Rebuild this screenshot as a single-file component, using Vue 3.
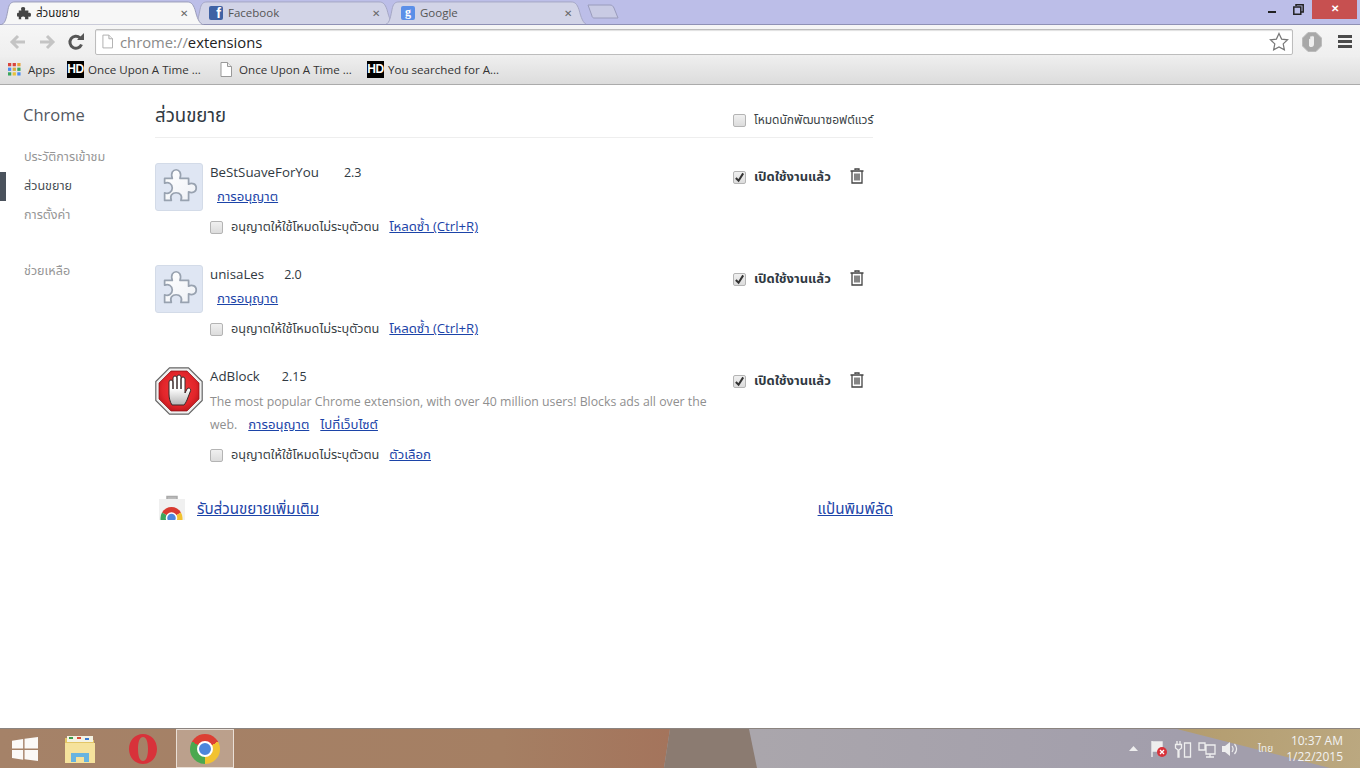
<script setup>
const tabs = [
  { id: 'ext', title: 'ส่วนขยาย', active: true },
  { id: 'fb', title: 'Facebook' },
  { id: 'g', title: 'Google' },
]
const exts = [
  { name: 'BeStSuaveForYou', ver: '2.3', gap: 25, icon: 'puzzle', action: 'โหลดซ้ำ (Ctrl+R)' },
  { name: 'unisaLes', ver: '2.0', gap: 20, icon: 'puzzle', action: 'โหลดซ้ำ (Ctrl+R)' },
  { name: 'AdBlock', ver: '2.15', gap: 22, icon: 'adblock', action: 'ตัวเลือก', desc: 'The most popular Chrome extension, with over 40 million users! Blocks ads all over the', desc2: 'web.' },
]
const puzzle = 'M9 15H17C15 9 18 6 21 6C24 6 27 9 25 15H34V21C38 19 42 21 42 25C42 29 38 31 34 29V38H26C28 33 25 30 21 30C17 30 14 33 16 38H9V30C13 32 17 29 17 25C17 21 13 18 9 20Z'
const hand = 'M17 38C15 35 14 31 14 27V15a2 2 0 0 1 4 0v7V11a2 2 0 0 1 4 0v11V10a2 2 0 0 1 4 0v12V12a2 2 0 0 1 4 0v14l2-4a2 2 0 0 1 3.600 1.600L32 33c-1 2-2 4-3 5z'
</script>

<template>
  <div class="window">
    <header class="strip">
      <div class="tabs">
        <div v-for="t in tabs" :key="t.id" class="tab" :class="{ active: t.active }">
          <svg class="tabshape" viewBox="0 0 204 25" preserveAspectRatio="none">
            <path d="M0 25C5 24 6 20 8 9 9 3 11 1 15 1H187c4 0 6 2 8 8 2 8 4 15 9 16z" />
          </svg>
          <svg v-if="t.id === 'ext'" class="fav" viewBox="0 0 16 16"><path fill="#444" d="M2 5h3C4 2 5 1 7 1s3 1 2 4h4v3c2-1 3 0 3 2s-1 3-3 2v3H9c1-2 0-3-2-3s-3 1-2 3H2v-3C0 13 0 11 0 10s0-3 2-2z"/></svg>
          <span v-else-if="t.id === 'fb'" class="fav fb">f</span>
          <span v-else class="fav gg">g</span>
          <span class="tabtitle">{{ t.title }}</span>
          <span class="tabx">✕</span>
        </div>
        <svg class="newtab" viewBox="0 0 32 15"><path d="M1 1H23c2 0 3 1 4 3l4 10H7c-1 0-2-1-2-2z" fill="#c9cbe4" stroke="#9a9cbc"/></svg>
      </div>
      <div class="winbtns">
        <span class="minbtn"></span>
        <svg class="restbtn" viewBox="0 0 11 11"><path d="M3 2V.8h7.200V8H8.500M.8 3h7v7.200h-7z" fill="none" stroke="#222" stroke-width="1.500"/></svg>
        <span class="closebtn">✕</span>
      </div>
    </header>

    <div class="toolbar">
      <svg class="navicon" viewBox="0 0 18 18"><path d="M16 9H4M9 3L3 9l6 6" fill="none" stroke="#c4c4c4" stroke-width="3"/></svg>
      <svg class="navicon fwd" viewBox="0 0 18 18"><path d="M2 9h12M9 3l6 6-6 6" fill="none" stroke="#c4c4c4" stroke-width="3"/></svg>
      <svg class="navicon reload" viewBox="0 0 18 18"><path d="M14.500 11.500A6 6 0 1 1 13 4.800" fill="none" stroke="#555" stroke-width="3"/><path d="M10 7h7V0z" fill="#555"/></svg>
      <div class="omni">
        <svg class="pageicon" viewBox="0 0 12 15"><path d="M1 .5h6.500l4 4v10H1z" fill="#fff" stroke="#aaa"/><path d="M7.500.5v4h4" fill="#eee" stroke="#aaa"/></svg>
        <span class="url"><span class="scheme">chrome://</span>extensions</span>
        <svg class="star" viewBox="0 0 20 20"><path d="M10 1.500l2.600 5.600 6 .7-4.400 4.100 1.200 6L10 15l-5.400 2.900 1.200-6L1.400 7.800l6-.7z" fill="#fff" stroke="#777" stroke-width="1.200"/></svg>
      </div>
      <svg class="abgray" viewBox="0 0 20 20"><path d="M6 .5h8L19.500 6v8L14 19.500H6L.5 14V6z" fill="#a8a8a8" stroke="#bbb"/><path d="M7 14V7.500c0-1 1.200-1 1.200 0V5c0-1 1.300-1 1.300 0v-.5c0-1 1.300-1 1.300 0V5c0-1 1.200-1 1.200 0v7c0 2-1 3-2.500 3S8 15 7 14z" fill="#eee"/></svg>
      <div class="menu"><i></i><i></i><i></i></div>
    </div>

    <div class="bookmarks">
      <span class="bm apps">
        <svg class="bmicon" viewBox="0 0 14 14">
          <rect x="0" y="0" width="3.500" height="3.500" fill="#d9453c"/><rect x="5" y="0" width="3.500" height="3.500" fill="#d9453c"/><rect x="10" y="0" width="3.500" height="3.500" fill="#e8a33a"/>
          <rect x="0" y="5" width="3.500" height="3.500" fill="#4c8cf0"/><rect x="5" y="5" width="3.500" height="3.500" fill="#d9a93a"/><rect x="10" y="5" width="3.500" height="3.500" fill="#3ba55d"/>
          <rect x="0" y="10" width="3.500" height="3.500" fill="#3ba55d"/><rect x="5" y="10" width="3.500" height="3.500" fill="#e8c13a"/><rect x="10" y="10" width="3.500" height="3.500" fill="#4c8cf0"/>
        </svg>Apps
      </span>
      <span class="bm b1"><b class="hd">HD</b>Once Upon A Time ...</span>
      <span class="bm b2"><svg class="bmpage" viewBox="0 0 12 15"><path d="M1 .5h6.500l4 4v10H1z" fill="#fff" stroke="#999"/><path d="M7.500.5v4h4" fill="#eee" stroke="#999"/></svg>Once Upon A Time ...</span>
      <span class="bm b3"><b class="hd">HD</b>You searched for A...</span>
    </div>

    <div class="page">
      <nav class="side">
        <h1>Chrome</h1>
        <ul>
          <li>ประวัติการเข้าชม</li>
          <li class="on">ส่วนขยาย</li>
          <li>การตั้งค่า</li>
          <li class="help">ช่วยเหลือ</li>
        </ul>
      </nav>
      <main class="main">
        <div class="pagehead">
          <h2>ส่วนขยาย</h2>
          <label class="dev"><span class="cb"></span>โหมดนักพัฒนาซอฟต์แวร์</label>
        </div>
        <section v-for="e in exts" :key="e.name" class="ext">
          <div class="iconbox" :class="e.icon">
            <svg v-if="e.icon === 'puzzle'" viewBox="0 0 48 48" class="pz">
              <defs>
                <linearGradient id="pzg" x1="0" y1="0" x2="1" y2="1"><stop offset="0" stop-color="#ffffff"/><stop offset="1" stop-color="#eef1f6"/></linearGradient>
              </defs>
              <path :d="puzzle" fill="url(#pzg)" stroke="#98a2b0" stroke-width="1.800" stroke-linejoin="round"/>
            </svg>
            <svg v-else viewBox="0 0 48 48" class="pz">
              <defs>
                <radialGradient id="redg" cx="0.5" cy="0.45" r="0.6"><stop offset="0" stop-color="#f4393c"/><stop offset="0.7" stop-color="#e2252a"/><stop offset="1" stop-color="#b8161c"/></radialGradient>
                <linearGradient id="handg" x1="0" y1="0" x2="0" y2="1"><stop offset="0.45" stop-color="#fff"/><stop offset="1" stop-color="#b5b5b5"/></linearGradient>
              </defs>
              <path d="M14.500 .8h19L47.200 14.500v19L33.500 47.200h-19L.8 33.500v-19z" fill="#f0f0f0" stroke="#666" stroke-width="1.200"/>
              <path d="M16 4h16l12 12v16L32 44H16L4 32V16z" fill="url(#redg)" stroke="#8f1015" stroke-width=".7"/>
              <path :d="hand" fill="url(#handg)" stroke="#3a2a2a" stroke-width="1"/>
            </svg>
          </div>
          <div class="body">
            <div class="title"><span class="name">{{ e.name }}</span><span class="ver" :style="{ marginLeft: e.gap + 'px' }">{{ e.ver }}</span></div>
            <template v-if="e.desc">
              <p class="desc">{{ e.desc }}</p>
              <p class="desc row2"><span>{{ e.desc2 }}</span><a class="lk">การอนุญาต</a><a class="lk">ไปที่เว็บไซต์</a></p>
            </template>
            <p v-else class="perm"><a class="lk">การอนุญาต</a></p>
            <div class="incog">
              <span class="cb"></span><span class="inlabel">อนุญาตให้ใช้โหมดไม่ระบุตัวตน</span><a class="lk">{{ e.action }}</a>
            </div>
          </div>
          <div class="enable">
            <span class="cb checked"><svg viewBox="0 0 12 12"><path d="M2 6.500l3 3 5-8" fill="none" stroke="#333" stroke-width="2.200"/></svg></span>
            <span class="enlabel">เปิดใช้งานแล้ว</span>
            <svg class="trash" viewBox="0 0 14 16"><path d="M5 2V1h4v1M.5 3h13M2 3.500V15h10V3.500M5 5.500v7M7 5.500v7M9 5.500v7" fill="none" stroke="#444" stroke-width="1.300"/></svg>
          </div>
        </section>
        <div class="foot">
          <svg class="store" viewBox="0 0 28 25">
            <path d="M1 4h26v21H1z" fill="#f0f0f0"/><path d="M9 4V1.500h10V4" fill="#bbb" stroke="#aaa" stroke-width="1.500"/>
            <path d="M13.500 23L4 17.500A11 11 0 0 1 23 17.500z" fill="#d83a30"/>
            <path d="M13.500 23L23 17.500A11 11 0 0 1 24.500 23V25H13.500z" fill="#f2c230"/>
            <path d="M13.500 23L4 17.500A11 11 0 0 0 2.500 23V25H13.500z" fill="#3ba55d"/>
            <circle cx="13.500" cy="23" r="5" fill="#4c86dc" stroke="#fff" stroke-width="1.500"/>
          </svg>
          <a class="lk big">รับส่วนขยายเพิ่มเติม</a>
          <a class="lk big right">แป้นพิมพ์ลัด</a>
        </div>
      </main>
    </div>

    <footer class="taskbar">
      <svg class="wall" viewBox="0 0 1360 40" preserveAspectRatio="none">
        <defs>
          <linearGradient id="brown" gradientUnits="userSpaceOnUse" x1="0" y1="0" x2="670" y2="0"><stop offset="0" stop-color="#a58268"/><stop offset=".75" stop-color="#a57f63"/><stop offset="1" stop-color="#a4745c"/></linearGradient>
          <linearGradient id="lilac" gradientUnits="userSpaceOnUse" x1="757" y1="0" x2="1180" y2="0"><stop offset="0" stop-color="#aaa6ac"/><stop offset="1" stop-color="#a29eac"/></linearGradient>
        </defs>
        <rect width="1360" height="40" fill="url(#lilac)"/>
        <polygon points="0,0 670,0 664,40 0,40" fill="url(#brown)"/>
        <polygon points="670,0 749,0 757,40 664,40" fill="#8b7b71"/>
      </svg>
      <div class="gold"></div>
      <button class="tb start"><svg viewBox="0 0 28 26"><path d="M0 4l12-1.700V12.500H0zM13.500 2L28 0v12.500H13.500zM0 14h12v10.500L0 22.800zM13.500 14H28v12l-14.500-2z" fill="#fff" opacity=".95"/></svg></button>
      <button class="tb folder"><svg viewBox="0 0 32 32"><path d="M1 5h11l2 2h16v22H1z" fill="#e3c667"/><path d="M3 3h26v6H3z" fill="#f4f2e2"/><rect x="5" y="4" width="4" height="2" fill="#3a9a4a"/><rect x="13" y="4" width="4" height="2" fill="#d84a3a"/><rect x="21" y="5" width="4" height="2" fill="#3a7ad0"/><path d="M1 10h30v20H1z" fill="#f5e29c"/><path d="M7 29V20h18v9h-5v-5h-8v5z" fill="#67b4e0"/></svg></button>
      <button class="tb opera"><svg viewBox="0 0 30 32"><path fill-rule="evenodd" d="M15 1c8 0 14 6.500 14 15s-6 15-14 15S1 24.500 1 16 7 1 15 1zm0 3c-3.500 0-5 5.500-5 12s1.500 12 5 12 5-5.500 5-12-1.500-12-5-12z" fill="#d8323a"/></svg></button>
      <button class="tb chrome active"><span class="chromelogo"><i></i></span></button>
      <div class="tray">
        <svg class="caret" viewBox="0 0 9 5"><path d="M0 5l4.500-5L9 5z" fill="#eee"/></svg>
        <svg class="ti flag" viewBox="0 0 18 18"><path d="M2 1v16M2 2h10v9H2" fill="#eee" stroke="#eee" stroke-width="1.400"/><circle cx="12" cy="12" r="5" fill="#d8323a"/><path d="M10 10l4 4M14 10l-4 4" stroke="#fff" stroke-width="1.300"/></svg>
        <svg class="ti batt" viewBox="0 0 18 18"><path d="M3 1v3M6 1v3M1.500 4.500h6V8L5 10v7H4v-7L1.500 8zM10.500 3h6v14h-6z" fill="none" stroke="#eee" stroke-width="1.300"/></svg>
        <svg class="ti net" viewBox="0 0 18 18"><path d="M1 3h6v7H1zM8 5h9v9H8zM12 14v3M8 17h8" fill="none" stroke="#eee" stroke-width="1.300"/></svg>
        <svg class="ti vol" viewBox="0 0 18 18"><path d="M2 6h3l5-4v14l-5-4H2z" fill="#eee"/><path d="M12 6c1.500 2 1.500 4 0 6M14.500 4c2.500 3 2.500 7 0 10" fill="none" stroke="#eee" stroke-width="1.200"/></svg>
        <span class="lang">ไทย</span>
        <div class="clock"><div>10:37 AM</div><div>1/22/2015</div></div>
      </div>
    </footer>
  </div>
</template>

<style>
html, body { margin: 0; padding: 0; background: #fff; overflow: hidden; }
</style>

<style scoped>
.window { width: 1360px; height: 768px; display: flex; flex-direction: column; font-family: "Open Sans", "Noto Sans", "Noto Sans Thai", "DejaVu Sans", sans-serif; overflow: hidden; color: #303942; }
.strip { height: 31px; flex: none; background: #bcbee8; display: flex; justify-content: space-between; align-items: flex-start; box-sizing: border-box; margin-bottom: -6px; }
.tabs { display: flex; height: 29px; padding-top: 1px; box-sizing: border-box; align-items: flex-start; }
.tab { position: relative; width: 204px; height: 24px; margin-right: -12px; display: flex; align-items: center; padding: 0 12px 0 17px; box-sizing: border-box; z-index: 1; }
.tab.active { z-index: 3; }
.tabshape { position: absolute; inset: 0; width: 100%; height: 100%; }
.tabshape path { fill: #d2d4e7; stroke: #a4a6c4; }
.tab.active .tabshape path { fill: #f7f7f7; stroke: #9a9cb8; }
.fav { position: relative; width: 14px; height: 14px; flex: none; margin-right: 5px; }
.fb { background: #3f62a4; color: #fff; font: bold 14px/14px "Liberation Sans", sans-serif; text-align: right; padding-right: 2px; box-sizing: border-box; border-radius: 2px; }
.gg { background: #5b8fe8; color: #fff; font: bold 12px/12px "Liberation Serif", serif; text-align: center; border-radius: 2px; }
.tabtitle { position: relative; flex: 1; font-size: 11.500px; color: #555; white-space: nowrap; padding-bottom: 2px; }
.tab.active .tabtitle { color: #222; padding-bottom: 0; }
.tabx { position: relative; font-size: 10px; font-weight: 700; color: #666; width: 12px; }
.newtab { width: 32px; height: 15px; margin: 3px 0 0 11px; position: relative; }
.winbtns { display: flex; align-items: flex-start; padding-right: 3px; }
.minbtn { width: 8px; height: 2px; background: #222; margin: 11px 0 0; }
.restbtn { width: 11px; height: 11px; margin: 4px 8px 0 17px; }
.closebtn { width: 45px; height: 19px; background: #c75050; color: #fff; font: bold 10px/18px "Liberation Sans", sans-serif; text-align: center; }

.toolbar { height: 32px; flex: none; position: relative; z-index: 2; display: flex; align-items: center; padding: 1px 0 0 9px; box-sizing: border-box; background: linear-gradient(#f6f6f6, #efefef); box-shadow: 0 -1px 0 #8f91b5; }
.navicon { width: 18px; height: 18px; flex: none; }
.fwd { margin-left: 11px; }
.reload { margin-left: 11px; }
.omni { width: 1198px; height: 26px; margin-left: 10px; box-sizing: border-box; background: #fff; border: 1px solid #bdbdbd; border-radius: 2px; display: flex; align-items: center; padding: 0 3px 0 6px; box-shadow: inset 0 1px 1px #e0e0e0; }
.pageicon { width: 11px; height: 15px; flex: none; margin-right: 7px; }
.url { flex: 1; font: 14.800px "Open Sans", "Noto Sans", sans-serif; color: #222; }
.scheme { color: #8a8a8a; }
.star { width: 20px; height: 20px; flex: none; }
.abgray { width: 20px; height: 20px; margin-left: 9px; flex: none; }
.menu { margin-left: 16px; width: 14px; display: flex; flex-direction: column; gap: 2px; }
.menu i { display: block; height: 3px; background: #4a4a4a; }

.bookmarks { height: 28px; flex: none; box-sizing: border-box; border-bottom: 1px solid #ababab; background: linear-gradient(#eeeeee, #dcdcdc); display: flex; align-items: center; padding: 0 0 3px 8px; font-size: 11.600px; color: #333; }
.bm { display: inline-flex; align-items: center; white-space: nowrap; }
.bmicon { width: 13px; height: 13px; margin-right: 7px; }
.apps { width: 59px; }
.hd { width: 17px; height: 17px; background: #000; color: #fff; font: bold 12px/17px "Liberation Sans Narrow", "Liberation Sans", sans-serif; text-align: center; margin-right: 4px; letter-spacing: -0.5px; flex: none; }
.b1 { width: 150px; }
.b2 { width: 150px; }
.bmpage { width: 12px; height: 15px; margin: 0 7px 0 3px; }

.page { flex: 1; display: flex; background: #fff; min-height: 0; }
.side { width: 155px; flex: none; font-size: 12.600px; }
.side h1 { margin: 18px 0 0 23px; font-size: 16.500px; font-weight: 400; line-height: 24px; color: #53585f; }
.side ul { list-style: none; margin: 16px 0 0; padding: 0; }
.side li { height: 29px; line-height: 27px; padding-left: 24px; color: #969696; box-sizing: border-box; white-space: nowrap; }
.side li.on { color: #4a4f55; border-left: 6px solid #4a525c; padding-left: 18px; }
.side li.help { margin-top: 27px; }
.main { width: 718px; flex: none; font-size: 12px; }
.pagehead { height: 53px; box-sizing: border-box; border-bottom: 1px solid #eeeeee; display: flex; align-items: flex-start; justify-content: space-between; }
.pagehead h2 { margin: 17px 0 0; font-size: 18.600px; line-height: 25px; font-weight: 400; color: #303942; }
.dev { display: flex; align-items: center; width: 140px; margin-top: 26px; font-size: 12px; color: #3a3f45; white-space: nowrap; gap: 8px; }
.cb { width: 13px; height: 13px; flex: none; box-sizing: border-box; border: 1px solid #b4b4b4; border-radius: 2px; background: linear-gradient(#f0f0f0, #dcdcdc); display: inline-flex; align-items: center; justify-content: center; }
.cb svg { width: 11px; height: 11px; }

.ext { display: flex; margin-top: 25px; height: 77px; }
.ext:last-of-type { height: 102px; }
.iconbox { width: 48px; height: 48px; flex: none; border-radius: 3px; box-sizing: border-box; }
.iconbox.puzzle { background: #dfe6f3; border: 1px solid #d3dbe8; }
.pz { width: 100%; height: 100%; display: block; }
.body { width: 523px; margin-left: 7px; flex: none; }
.title { height: 18px; line-height: 18px; font-size: 13.300px; color: #303942; white-space: nowrap; }
.ver { font-size: 12.500px; }
.perm { margin: 0; padding: 6px 0 0 7px; line-height: 18px; }
.desc { margin: 5px 0 0; font-size: 12.300px; line-height: 23px; color: #8f8f8f; white-space: nowrap; }
.row2 { margin: 0; display: flex; align-items: baseline; gap: 11px; }
.lk { color: #1c44a8; text-decoration: underline; white-space: nowrap; font-size: 13.200px; }
.incog { display: flex; align-items: center; margin-top: 13px; height: 16px; }
.row2 + .incog { margin-top: 11px; }
.inlabel { margin: 0 10px 0 8px; font-size: 12.700px; color: #3a3f45; white-space: nowrap; }
.enable { display: flex; align-items: center; height: 16px; margin-top: 6px; font-weight: 700; font-size: 13px; color: #303942; white-space: nowrap; }
.enable .cb { margin-right: 8px; }
.enlabel { width: 96px; }
.trash { width: 14px; height: 16px; margin-top: -3px; }
.foot { position: relative; display: flex; align-items: flex-start; height: 25px; width: 738px; margin-top: 26px; padding-left: 3px; box-sizing: border-box; }
.store { width: 28px; height: 25px; flex: none; }
.lk.big { font-size: 15.200px; margin: 3px 0 0 11px; }
.lk.right { margin-left: auto; }

.taskbar { position: relative; height: 40px; flex: none; display: flex; align-items: stretch; box-sizing: border-box; border-top: 1px solid #8b8480; overflow: hidden; }
.wall { position: absolute; inset: 0; width: 100%; height: 100%; }
.gold { position: absolute; top: 0; right: 0; width: 183px; height: 100%; background: linear-gradient(100deg, #b39c6e, #bba880); clip-path: polygon(0 0, 100% 0, 100% 100%, 153px 100%); }
.tb { position: relative; border: 0; background: none; padding: 0; display: flex; align-items: center; justify-content: center; flex: none; width: 58px; height: 39px; }
.start { width: 50px; }
.start svg { width: 26px; height: 26px; }
.folder { width: 60px; }
.folder svg { width: 32px; height: 32px; }
.opera { width: 66px; }
.opera svg { width: 30px; height: 32px; }
.chrome.active { background: rgba(255, 255, 255, .25); border: 1px solid #eadfd6; box-sizing: border-box; }
.chromelogo { width: 30px; height: 30px; border-radius: 50%; background: conic-gradient(#dc3f33 0 60deg, #f2c230 60deg 180deg, #4aa84f 180deg 300deg, #dc3f33 300deg); display: flex; align-items: center; justify-content: center; }
.chromelogo i { width: 12px; height: 12px; border-radius: 50%; background: #4c86dc; border: 2px solid #fff; }
.tray { position: relative; margin-left: auto; display: flex; align-items: center; color: #eee; padding-right: 17px; }
.caret { width: 9px; height: 5px; margin-right: 12px; }
.ti { width: 18px; height: 18px; margin-right: 6px; }
.ti.net { margin-right: 4px; }
.lang { margin: 0 13px 0 14px; font-size: 10px; }
.clock { text-align: right; font: 12px/16px "Open Sans", sans-serif; color: #f2f2f2; padding-top: 1px; }
</style>
